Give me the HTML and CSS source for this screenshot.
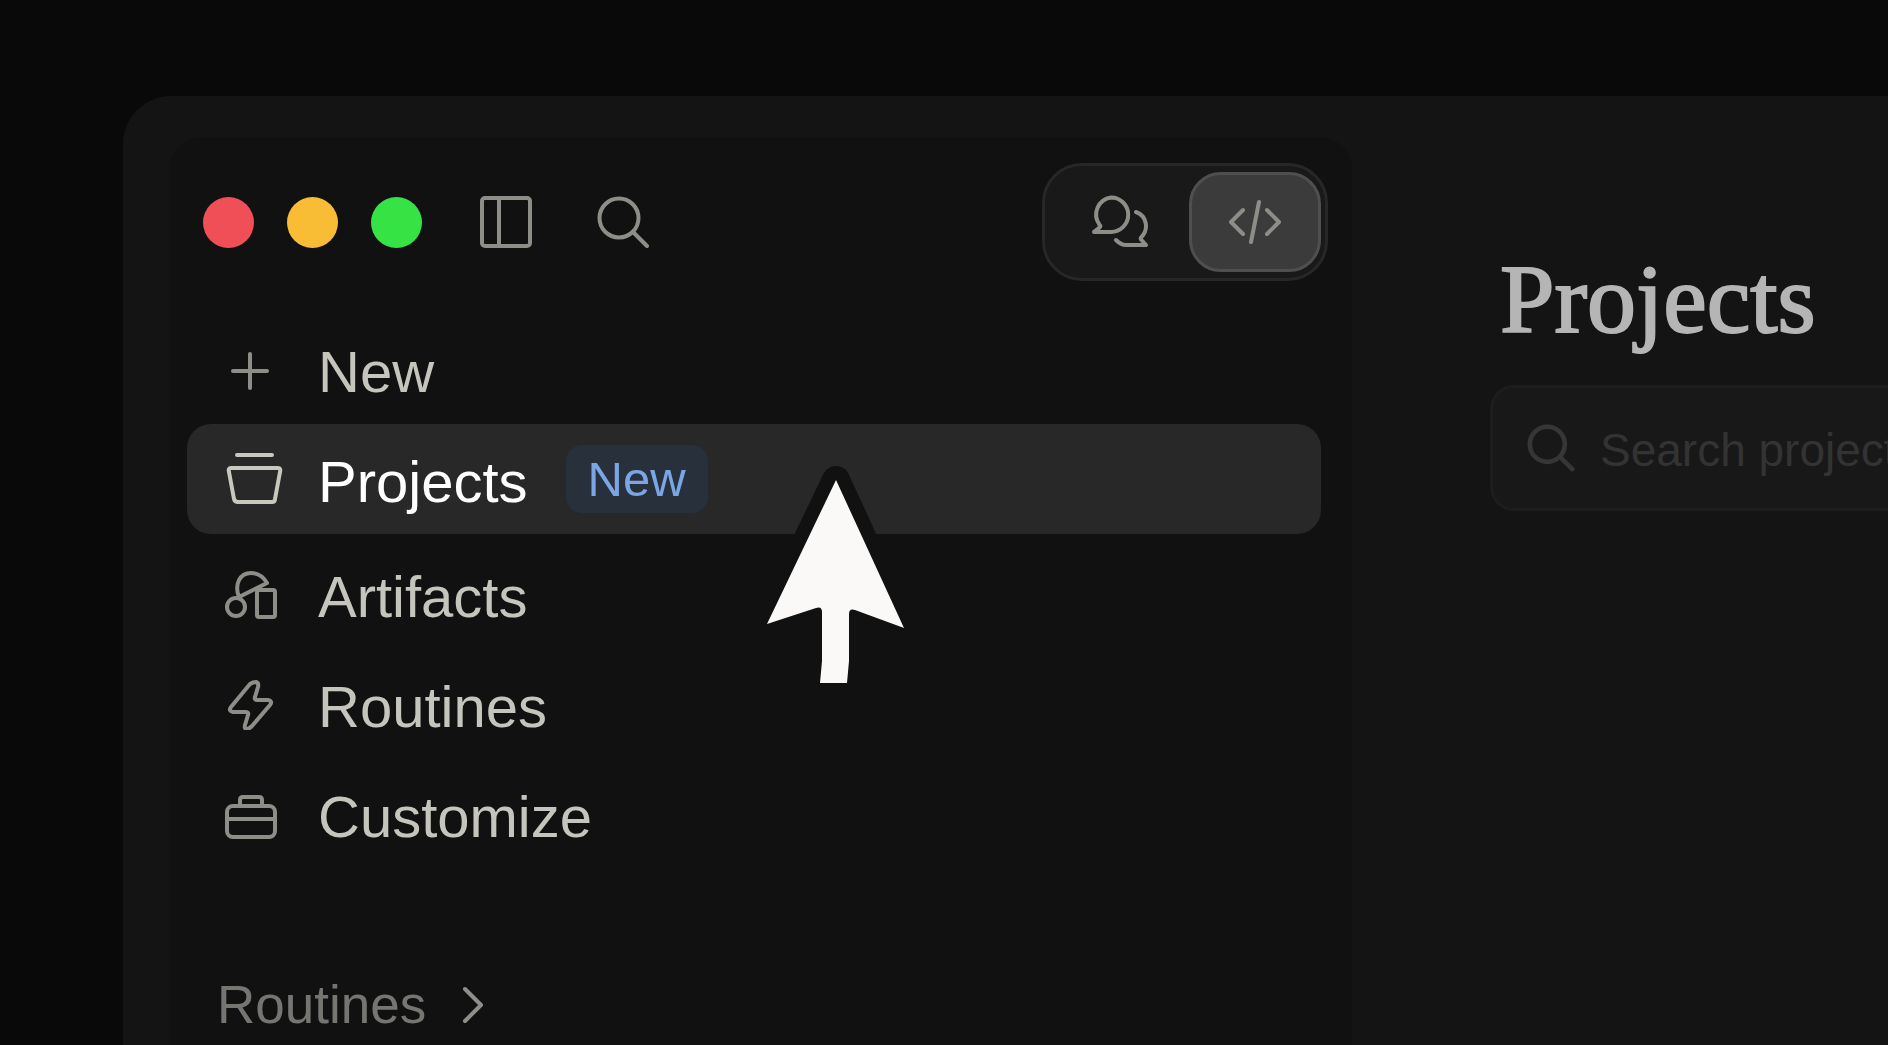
FILE: index.html
```
<!DOCTYPE html>
<html lang="en">
<head>
    <meta charset="UTF-8">
    <meta name="viewport" content="width=device-width, initial-scale=1.0">
    <title>Projects</title>
    <link rel="stylesheet" href="styles.css">
</head>
<body>
    <div class="window">
        <aside class="sidebar">
            <header class="toolbar">
                <div class="lights">
                    <button class="light red" aria-label="Close"></button>
                    <button class="light yellow" aria-label="Minimize"></button>
                    <button class="light green" aria-label="Zoom"></button>
                </div>
                <button class="tool" aria-label="Toggle sidebar">
                    <svg class="icon" viewBox="0 0 52 52"><rect x="2" y="2" width="48" height="48" rx="3"/><path d="M19 2v48"/></svg>
                </button>
                <button class="tool" aria-label="Search">
                    <svg class="icon" viewBox="0 0 52 52"><circle cx="22" cy="22" r="19.500"/><path d="M36 36l14 14"/></svg>
                </button>
                <div class="switch">
                    <button class="mode" aria-label="Chat">
                        <svg class="icon chat" viewBox="0 0 58 54"><path d="M20 2.500a17.200 17.200 0 0 1 0 34.400H3l5.500-4.200q1.500-1.500 0-3A17.200 17.200 0 0 1 20 2.500z"/><path d="M45 17c11 4 13 17 5.500 25q-1.500 1.500 0 3l4.500 5H35c-4 0-7-2-10-5"/></svg>
                    </button>
                    <button class="mode active" aria-label="Code">
                        <svg class="icon code" viewBox="0 0 54 48"><path d="M15 12L3 24l12 12M39 12l12 12-12 12M31 4l-8 40"/></svg>
                    </button>
                </div>
            </header>
            <nav class="menu">
                <a class="item" href="#">
                    <svg class="icon" viewBox="0 0 52 52"><path d="M25 11v34M8 28h34"/></svg>
                    <span class="label">New</span>
                </a>
                <a class="item active" href="#">
                    <svg class="icon wide" viewBox="0 0 58 52"><path d="M12 2h35M6 15h47q3 0 2 4l-5 27q0 3-3 3H13q-3 0-4-3L4 19q-1-4 2-4z"/></svg>
                    <span class="label">Projects</span>
                    <span class="badge">New</span>
                </a>
                <a class="item" href="#">
                    <svg class="icon" viewBox="0 0 52 52"><circle cx="11" cy="39" r="9"/><path d="M14 29C9 16 15 5 26 5q10 0 16 10z"/><rect x="32" y="22" width="18" height="27" rx="2"/></svg>
                    <span class="label">Artifacts</span>
                </a>
                <a class="item" href="#">
                    <svg class="icon" viewBox="0 0 52 52"><path d="M25 6L6 29q-3 4 2 5h13q3 0 2 3l-3 10q-1 4 2 4 2 0 5-3l18-21q3-4-2-5H32q-3 0-2-3l3-10q1-4-2-5-3 0-6 2z"/></svg>
                    <span class="label">Routines</span>
                </a>
                <a class="item" href="#">
                    <svg class="icon" viewBox="0 0 52 52"><rect x="2" y="18" width="48" height="31" rx="6"/><path d="M2 31h48M15 18v-6q0-3 3-3h16q3 0 3 3v6"/></svg>
                    <span class="label">Customize</span>
                </a>
            </nav>
            <button class="section">
                <span>Routines</span>
                <svg class="chevron" viewBox="0 0 24 38"><path d="M3 3l16 16L3 35"/></svg>
            </button>
        </aside>
        <main class="content">
            <h1>Projects</h1>
            <label class="search">
                <svg class="icon small" viewBox="0 0 52 52"><circle cx="22" cy="22" r="19"/><path d="M36 36l13 13"/></svg>
                <input type="text" placeholder="Search projects..." aria-label="Search projects">
            </label>
        </main>
    </div>
    <svg class="pointer" viewBox="0 0 170 240">
        <path class="halo" d="M85 20L16 164l49-16q6-2 6 4v49l-2 22h27l2-22v-47q0-6 6-4l49 18z"/>
        <path class="arrow" d="M85 20L16 164l49-16q6-2 6 4v49l-2 22h27l2-22v-47q0-6 6-4l49 18z"/>
    </svg>
</body>
</html>
```
FILE: styles.css
```
* {
    box-sizing: border-box;
}
body {
    margin: 0;
    height: 100vh;
    padding: 96px 0 0 123px;
    overflow: hidden;
    background-color: #090909;
    color: #c5c5bd;
    font-family: "Liberation Sans", Arial, sans-serif;
}
button {
    padding: 0;
    border: none;
    background: none;
    color: inherit;
    font-family: inherit;
    cursor: pointer;
}
.window {
    display: flex;
    height: 100%;
    padding: 41px 0 0 47px;
    border-radius: 48px 0 0 0;
    background-color: #141414;
}
.sidebar {
    flex: none;
    width: 68.8%;
    padding: 26px 24px 0 17px;
    border-radius: 32px 32px 0 0;
    background-color: #111111;
}
.toolbar {
    display: flex;
    align-items: center;
    padding-left: 16px;
}
.lights {
    display: flex;
    gap: 33px;
}
.light {
    width: 51px;
    height: 51px;
    border-radius: 50%;
}
.red {
    background-color: #f04f58;
}
.yellow {
    background-color: #f8bd35;
}
.green {
    background-color: #35e344;
}
.icon {
    display: block;
    flex: none;
    width: 52px;
    height: 52px;
    fill: none;
    stroke: #8e8e89;
    stroke-width: 4;
    stroke-linecap: round;
    stroke-linejoin: round;
}
.tool {
    margin-left: 58px;
}
.tool + .tool {
    margin-left: 65px;
}
.switch {
    display: flex;
    width: 286px;
    height: 118px;
    margin-left: auto;
    padding: 6px 4px 6px 6px;
    border: 3px solid #272727;
    border-radius: 40px;
    background-color: #191919;
}
.mode {
    display: flex;
    flex: 1;
    align-items: center;
    justify-content: center;
    border-radius: 32px;
}
.mode.active {
    flex: 0 0 132px;
    border: 3px solid #4f4f4f;
    background-color: #3b3b3b;
}
.chat {
    width: 58px;
    height: 54px;
}
.code {
    width: 54px;
    height: 48px;
}
.menu {
    margin: 33px 7px 0 0;
}
.item {
    display: flex;
    align-items: center;
    gap: 41px;
    height: 110px;
    padding-left: 38px;
    border-radius: 24px;
    color: inherit;
    font-size: 58px;
    line-height: 64px;
    text-decoration: none;
}
.label {
    padding-top: 6px;
}
.item.active {
    gap: 35px;
    margin-bottom: 5px;
    background-color: #282828;
    color: #ffffff;
}
.item.active .icon {
    stroke: #c9c8be;
}
.wide {
    width: 58px;
}
.badge {
    margin-left: 3px;
    padding: 2px 22px;
    border-radius: 16px;
    background-color: #28303c;
    color: #7ba6e6;
    font-size: 49px;
}
.section {
    display: flex;
    align-items: center;
    gap: 36px;
    margin-top: 104px;
    padding-left: 30px;
    color: #757572;
    font-size: 53px;
    line-height: 64px;
}
.chevron {
    width: 24px;
    height: 38px;
    fill: none;
    stroke: #8e8e8b;
    stroke-width: 4;
    stroke-linecap: round;
    stroke-linejoin: round;
}
.content {
    flex: 1;
    min-width: 0;
    padding: 108px 0 0 138px;
}
h1 {
    margin: 0 0 32px 10px;
    color: #b5b5b5;
    font-family: "Liberation Serif", "Times New Roman", serif;
    font-size: 98px;
    font-weight: 400;
    line-height: 108px;
    -webkit-text-stroke: 2px #b5b5b5;
}
.search {
    display: flex;
    align-items: center;
    gap: 25px;
    height: 126px;
    padding-left: 34px;
    border: 3px solid #1d1d1d;
    border-right: none;
    border-radius: 24px 0 0 24px;
    background-color: #181818;
}
.small {
    width: 48px;
    height: 48px;
    stroke: #363636;
    stroke-width: 5;
}
.search input {
    flex: 1;
    min-width: 0;
    padding: 4px 0 0;
    border: none;
    outline: none;
    background: none;
    color: #b5b5b5;
    font-family: inherit;
    font-size: 46px;
}
.search input::placeholder {
    color: #333333;
    opacity: 1;
}
/* mouse pointer floats over the menu */
.pointer {
    position: absolute;
    top: 460px;
    left: 751px;
    width: 170px;
    height: 240px;
    pointer-events: none;
}
.halo {
    fill: #111111;
    stroke: #111111;
    stroke-width: 28;
    stroke-linejoin: round;
}
.arrow {
    fill: #faf9f7;
}
```
